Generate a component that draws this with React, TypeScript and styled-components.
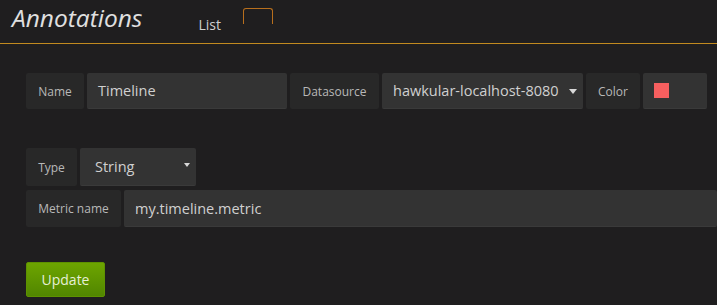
import { FC } from "react";
import styled, { createGlobalStyle } from "styled-components";

const GlobalStyle = createGlobalStyle`
    html, body {
        margin: 0;
        padding: 0;
        background: #1f1e1f;
        overflow: hidden;
    }

    body {
        font-family: "Open Sans", "DejaVu Sans", sans-serif;
        color: #d8d9da;
    }
`;

const Header = styled.header`
    height: 43px;
    display: flex;
    align-items: flex-start;
    border-bottom: 1px solid #c18a1f;
`;

const Title = styled.h1`
    margin: 3px 0 0 12px;
    font-size: 24.5px;
    font-style: italic;
    font-weight: 400;
    line-height: 30px;
    color: #e0e0e0;
`;

const Tabs = styled.nav`
    display: flex;
    align-items: flex-start;
    margin-left: 56px;
`;

const Tab = styled.span<{ $active?: boolean }>`
    display: block;
    box-sizing: border-box;
    font-size: 14px;
    color: #d0d0d0;
    margin-top: ${(p) => (p.$active ? "8px" : "15px")};
    margin-left: ${(p) => (p.$active ? "22px" : "0")};
    width: ${(p) => (p.$active ? "30px" : "auto")};
    height: ${(p) => (p.$active ? "16px" : "auto")};
    line-height: 20px;
    border: ${(p) => (p.$active ? "1.5px solid #b86f1d" : "none")};
    border-bottom: none;
    border-radius: 3px 3px 0 0;
`;

const Content = styled.section`
    padding: 29px 0 0 26px;
`;

const Row = styled.div<{ $top?: number }>`
    display: flex;
    gap: 3px;
    margin-top: ${(p) => p.$top ?? 0}px;
`;

const Label = styled.div<{ $w: number; $h?: number }>`
    box-sizing: border-box;
    width: ${(p) => p.$w}px;
    height: ${(p) => p.$h ?? 36}px;
    display: flex;
    align-items: center;
    justify-content: center;
    background: #282828;
    border-radius: 2px;
    font-size: 12px;
    color: #b8b8b8;
    white-space: nowrap;
`;

const Field = styled.div<{ $w?: number; $h?: number; $pad?: number }>`
    box-sizing: border-box;
    position: relative;
    width: ${(p) => (p.$w ? `${p.$w}px` : "auto")};
    flex: ${(p) => (p.$w ? "none" : "1")};
    height: ${(p) => p.$h ?? 36}px;
    display: flex;
    align-items: center;
    padding-left: ${(p) => p.$pad ?? 11}px;
    background: #333333;
    border-bottom: 1px solid #3a3a3a;
    border-radius: 2px;
    font-size: 14.5px;
    color: #d0d0d0;
    white-space: nowrap;
`;

const Caret = styled.span<{ $right: number; $size: number; $shift?: number }>`
    position: absolute;
    right: ${(p) => p.$right}px;
    top: 50%;
    margin-top: ${(p) => p.$shift ?? -2}px;
    width: 0;
    height: 0;
    border-left: ${(p) => p.$size}px solid transparent;
    border-right: ${(p) => p.$size}px solid transparent;
    border-top: ${(p) => p.$size + 1}px solid #d8d8d8;
`;

const Swatch = styled.span<{ $color: string }>`
    display: block;
    width: 15px;
    height: 15px;
    background: ${(p) => p.$color};
`;

const Button = styled.button`
    margin-top: 35px;
    width: 79px;
    height: 35px;
    box-sizing: border-box;
    border: 1px solid #5e9200;
    border-radius: 2px;
    background: linear-gradient(#6da500, #518600);
    font-family: "Open Sans", "DejaVu Sans", sans-serif;
    font-size: 14px;
    color: #e6efd6;
    padding: 0;
`;

const App: FC = () => {
    return (
        <>
            <GlobalStyle />
            <Header>
                <Title>Annotations</Title>
                <Tabs>
                    <Tab>List</Tab>
                    <Tab $active />
                </Tabs>
            </Header>

            <Content>
                <Row>
                    <Label $w={58}>Name</Label>
                    <Field $w={200}>Timeline</Field>
                    <Label $w={89}>Datasource</Label>
                    <Field $w={201}>
                        hawkular-localhost-8080
                        <Caret $right={6} $size={4} />
                    </Field>
                    <Label $w={54}>Color</Label>
                    <Field $w={64}>
                        <Swatch $color="#f65f5f" />
                    </Field>
                </Row>

                <Row $top={39}>
                    <Label $w={51} $h={38}>Type</Label>
                    <Field $w={116} $h={38} $pad={15}>
                        String
                        <Caret $right={6} $size={3} $shift={-4} />
                    </Field>
                </Row>

                <Row $top={4}>
                    <Label $w={95} $h={37}>Metric name</Label>
                    <Field $h={37}>my.timeline.metric</Field>
                </Row>

                <Button>Update</Button>
            </Content>
        </>
    );
};

export default App;
